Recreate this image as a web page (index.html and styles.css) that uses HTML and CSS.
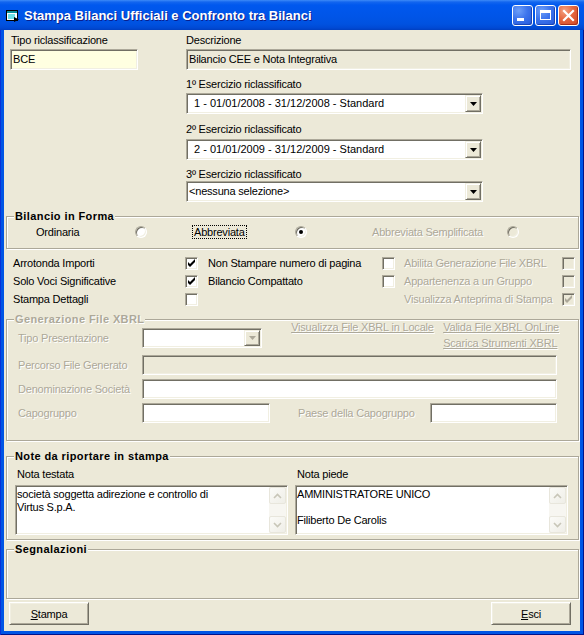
FILE: index.html
```html
<!DOCTYPE html>
<html lang="it">
<head>
<meta charset="utf-8">
<title>Stampa Bilanci Ufficiali e Confronto tra Bilanci</title>
<link rel="stylesheet" href="styles.css">
</head>
<body>
<div class="window">
  <div class="titlebar">
    <svg class="appicon" width="16" height="16" viewBox="0 0 16 16">
      <rect x="1.5" y="2.5" width="11" height="10" fill="#fff" stroke="#000"/>
      <rect x="2" y="3" width="10" height="2" fill="#0a8f9a"/>
      <rect x="3" y="6" width="7" height="5" fill="#6fe0e6"/>
      <path d="M9 9 L14 11.5 L9 14 Z" fill="#000"/>
    </svg>
    <span class="title">Stampa Bilanci Ufficiali e Confronto tra Bilanci</span>
    <div class="tbtns">
      <span class="tbtn"><svg width="19" height="19" viewBox="0 0 19 19"><rect x="4" y="12" width="7" height="3" fill="#fff"/></svg></span>
      <span class="tbtn"><svg width="19" height="19" viewBox="0 0 19 19"><rect x="4.5" y="4.5" width="10" height="9" fill="none" stroke="#fff"/><rect x="4" y="4" width="11" height="3" fill="#fff"/></svg></span>
      <span class="tbtn close"><svg width="19" height="19" viewBox="0 0 19 19"><path d="M5 5 L14 14 M14 5 L5 14" stroke="#fff" stroke-width="2.2" stroke-linecap="square"/></svg></span>
    </div>
  </div>

  <div class="client">
    <div class="top">
      <div class="col-left">
        <div class="lbl">Tipo riclassificazione</div>
        <div class="edit yellow">BCE</div>
      </div>
      <div class="col-right">
        <div class="lbl">Descrizione</div>
        <div class="edit ro">Bilancio CEE e Nota Integrativa</div>

        <div class="lbl lbl-e1">1º Esercizio riclassificato</div>
        <div class="combo">
          <span class="val pad">1 - 01/01/2008 - 31/12/2008 - Standard</span>
          <span class="cbtn"><svg width="7" height="4" viewBox="0 0 7 4"><path d="M0 0 H7 L3.5 4 Z" fill="#000"/></svg></span>
        </div>

        <div class="lbl lbl-e2">2º Esercizio riclassificato</div>
        <div class="combo">
          <span class="val pad">2 - 01/01/2009 - 31/12/2009 - Standard</span>
          <span class="cbtn"><svg width="7" height="4" viewBox="0 0 7 4"><path d="M0 0 H7 L3.5 4 Z" fill="#000"/></svg></span>
        </div>

        <div class="lbl lbl-e3">3º Esercizio riclassificato</div>
        <div class="combo">
          <span class="val txt">&lt;nessuna selezione&gt;</span>
          <span class="cbtn"><svg width="7" height="4" viewBox="0 0 7 4"><path d="M0 0 H7 L3.5 4 Z" fill="#000"/></svg></span>
        </div>
      </div>
    </div>

    <div class="group g-forma">
      <span class="gtitle">Bilancio in Forma</span>
      <div class="radios">
        <span>Ordinaria</span>
        <span class="radio"></span>
        <span><span class="focus">Abbreviata</span></span>
        <span class="radio on"></span>
        <span class="dis">Abbreviata Semplificata</span>
        <span class="radio off"></span>
      </div>
    </div>

    <div class="checks">
      <span>Arrotonda Importi</span>
      <span class="chk"><svg width="9" height="9" viewBox="0 0 9 9"><path d="M1 3 L3 5 L8 0 L8 3 L3 8 L1 6 Z" fill="#000"/></svg></span>
      <span>Non Stampare numero di pagina</span>
      <span class="chk"></span>
      <span class="dis">Abilita Generazione File XBRL</span>
      <span class="chk off"></span>

      <span>Solo Voci Significative</span>
      <span class="chk"><svg width="9" height="9" viewBox="0 0 9 9"><path d="M1 3 L3 5 L8 0 L8 3 L3 8 L1 6 Z" fill="#000"/></svg></span>
      <span>Bilancio Compattato</span>
      <span class="chk"></span>
      <span class="dis">Appartenenza a un Gruppo</span>
      <span class="chk off"></span>

      <span>Stampa Dettagli</span>
      <span class="chk"></span>
      <span></span>
      <span></span>
      <span class="dis">Visualizza Anteprima di Stampa</span>
      <span class="chk off"><svg width="9" height="9" viewBox="0 0 9 9"><path d="M1 3 L3 5 L8 0 L8 3 L3 8 L1 6 Z" fill="#ACA899"/></svg></span>
    </div>

    <div class="group g-xbrl">
      <span class="gtitle dis">Generazione File XBRL</span>
      <div class="xrow xrow1">
        <span class="xlbl dis">Tipo Presentazione</span>
        <div class="combo small">
          <span class="val"></span>
          <span class="cbtn"><svg width="7" height="4" viewBox="0 0 7 4"><path d="M0 0 H7 L3.5 4 Z" fill="#ACA899"/></svg></span>
        </div>
        <div class="links">
          <span class="link">Visualizza File XBRL in Locale</span>
          <span class="link">Valida File XBRL OnLine</span>
          <span></span>
          <span class="link">Scarica Strumenti XBRL</span>
        </div>
      </div>
      <div class="xrow">
        <span class="xlbl dis">Percorso File Generato</span>
        <div class="edit field ro wide"></div>
      </div>
      <div class="xrow">
        <span class="xlbl dis">Denominazione Società</span>
        <div class="edit field wide"></div>
      </div>
      <div class="xrow">
        <span class="xlbl dis">Capogruppo</span>
        <div class="edit field capo"></div>
        <span class="paese dis">Paese della Capogruppo</span>
        <div class="edit field paese-in"></div>
      </div>
    </div>

    <div class="group g-note">
      <span class="gtitle">Note da riportare in stampa</span>
      <div class="notes">
        <div class="note">
          <div class="nlbl">Nota testata</div>
          <div class="memo">
            <div class="mtxt">società soggetta adirezione e controllo di<br>Virtus S.p.A.</div>
            <div class="sb">
              <span class="sbtn"><svg width="9" height="6" viewBox="0 0 9 6"><path d="M1 5 L4.5 1.5 L8 5" fill="none" stroke="#C8C6B8" stroke-width="1.6"/></svg></span>
              <span class="sbtn"><svg width="9" height="6" viewBox="0 0 9 6"><path d="M1 1 L4.5 4.5 L8 1" fill="none" stroke="#C8C6B8" stroke-width="1.6"/></svg></span>
            </div>
          </div>
        </div>
        <div class="note">
          <div class="nlbl">Nota piede</div>
          <div class="memo">
            <div class="mtxt">AMMINISTRATORE UNICO<br><br>Filiberto De Carolis</div>
            <div class="sb">
              <span class="sbtn"><svg width="9" height="6" viewBox="0 0 9 6"><path d="M1 5 L4.5 1.5 L8 5" fill="none" stroke="#C8C6B8" stroke-width="1.6"/></svg></span>
              <span class="sbtn"><svg width="9" height="6" viewBox="0 0 9 6"><path d="M1 1 L4.5 4.5 L8 1" fill="none" stroke="#C8C6B8" stroke-width="1.6"/></svg></span>
            </div>
          </div>
        </div>
      </div>
    </div>

    <div class="group g-segn">
      <span class="gtitle">Segnalazioni</span>
    </div>

    <div class="buttons">
      <span class="btn"><u>S</u>tampa</span>
      <span class="btn"><u>E</u>sci</span>
    </div>
  </div>
</div>
</body>
</html>
```

FILE: styles.css
```css
* { box-sizing: border-box; }
html, body { margin: 0; padding: 0; }
body {
  width: 584px;
  height: 635px;
  overflow: hidden;
  font-family: "Liberation Sans", Arial, sans-serif;
  font-size: 11px;
  color: #000;
  background: #0054E3;
}

.window {
  width: 584px;
  height: 635px;
  padding: 0 4px 4px;
  background: #0055E5;
  box-shadow: inset 1px 0 #0831D9, inset -1px 0 #00138C, inset 0 -1px #00138C;
}

/* ---------- title bar ---------- */
.titlebar {
  height: 30px;
  margin: 0 -4px;
  padding: 1px 5px 0 5px;
  display: flex;
  align-items: center;
  color: #fff;
  background: linear-gradient(#3D8BF8 0px, #1366EF 2px, #0058EE 5px, #0055E8 16px, #0052E0 24px, #0049D4 28px, #003FC0 30px);
}
.appicon { flex: none; margin-right: 3px; }
.title {
  flex: 1;
  font-weight: bold;
  font-size: 13px;
  text-shadow: 1px 1px #0A1E8C;
  white-space: nowrap;
}
.tbtns { display: flex; gap: 2px; }
.tbtn {
  width: 21px;
  height: 21px;
  border: 1px solid #fff;
  border-radius: 3px;
  display: flex;
  align-items: center;
  justify-content: center;
  background: radial-gradient(circle at 30% 25%, #6E9FF8 0%, #3D74EC 45%, #2458DA 100%);
  box-shadow: inset -1px -1px #1A45B8;
}
.tbtn.close {
  background: radial-gradient(circle at 30% 25%, #F4A282 0%, #E5673F 45%, #CC4424 100%);
  box-shadow: inset -1px -1px #A8301A;
}

/* ---------- client ---------- */
.client {
  height: 601px;
  background: #ECE9D8;
  letter-spacing: -0.2px;
}

.lbl { height: 13px; line-height: 13px; white-space: nowrap; margin-bottom: 2px; }

.top { display: flex; padding-top: 4px; height: 172px; }
.col-left { width: 182px; padding-left: 6px; }
.col-left .lbl { padding-left: 1px; }
.col-right { width: 385px; }

.lbl-e1 { margin-top: 8px; }
.lbl-e2 { margin-top: 9px; margin-bottom: 3px; }
.lbl-e3 { margin-top: 8px; margin-bottom: 0; }

.edit {
  height: 21px;
  border: 1px solid;
  border-color: #ACA899 #fff #fff #ACA899;
  box-shadow: inset 1px 1px #716F64, inset -1px -1px #F1EFE2;
  background: #fff;
  padding: 0 2px;
  line-height: 19px;
  white-space: nowrap;
  overflow: hidden;
}
.edit.yellow { width: 128px; background: #FFFFE1; }
.edit.ro { background: #ECE9D8; }

.combo {
  width: 297px;
  height: 21px;
  display: flex;
  padding: 1px;
  border: 1px solid;
  border-color: #ACA899 #fff #fff #ACA899;
  box-shadow: inset 1px 1px #716F64, inset -1px -1px #F1EFE2;
  background: #fff;
}
.combo .val { flex: 1; line-height: 17px; padding-left: 1px; white-space: nowrap; overflow: hidden; letter-spacing: 0; }
.combo .val.txt { letter-spacing: -0.2px; }
.combo .val.pad { padding-left: 6px; }
.cbtn {
  width: 16px;
  height: 17px;
  display: flex;
  align-items: center;
  justify-content: center;
  background: #ECE9D8;
  border: 1px solid;
  border-color: #F1EFE2 #716F64 #716F64 #F1EFE2;
  box-shadow: inset 1px 1px #fff, inset -1px -1px #ACA899;
}
.combo.small { width: 120px; height: 20px; }
.combo.small .cbtn { height: 16px; }

/* ---------- group boxes ---------- */
.group {
  position: relative;
  margin: 0 1px 0 2px;
  border: 1px solid #ACA899;
  box-shadow: 1px 1px #fff, inset 1px 1px #fff;
}
.gtitle {
  position: absolute;
  top: -7px;
  left: 7px;
  padding: 0 1px;
  line-height: 13px;
  font-weight: bold;
  letter-spacing: 0.4px;
  background: #ECE9D8;
  white-space: nowrap;
}

.dis { color: #ACA899; text-shadow: 1px 1px #fff; }

.g-forma { margin-top: 14px; padding: 7px 0 8px 29px; }
.radios {
  display: grid;
  grid-template-columns: 99px 59px 101px 77px 135px 12px;
  height: 16px;
  align-items: center;
  white-space: nowrap;
}
.radio {
  width: 12px;
  height: 12px;
  border-radius: 50%;
  border: 1px solid;
  border-color: #ACA899 #fff #fff #ACA899;
  box-shadow: inset 1px 1px #716F64, inset -1px -1px #F1EFE2;
  background: #fff;
  display: flex;
  align-items: center;
  justify-content: center;
}
.radio.on::after {
  content: "";
  width: 4px;
  height: 4px;
  border-radius: 50%;
  background: #000;
}
.radio.off { background: #ECE9D8; }
.focus { outline: 1px dotted #000; outline-offset: 0; padding: 0 1px; margin-left: -1px; }

.checks {
  display: grid;
  grid-template-columns: 172px 23px 174px 22px 158px 13px;
  grid-auto-rows: 18px;
  align-items: center;
  padding-left: 9px;
  margin-top: 5px;
  white-space: nowrap;
}
.chk {
  width: 13px;
  height: 13px;
  border: 1px solid;
  border-color: #ACA899 #fff #fff #ACA899;
  box-shadow: inset 1px 1px #716F64, inset -1px -1px #F1EFE2;
  background: #fff;
  display: flex;
  align-items: center;
  justify-content: center;
}
.chk.off { background: #ECE9D8; }

/* XBRL */
.g-xbrl { margin-top: 11px; padding: 0 20px 17px 11px; }
.xrow { display: flex; align-items: center; margin-top: 4px; }
.xrow1 { align-items: flex-start; margin-top: 0; }
.xlbl { width: 124px; height: 20px; line-height: 20px; white-space: nowrap; }
.xrow1 .xlbl, .xrow1 .combo { margin-top: 8px; }
.links {
  margin-left: auto;
  margin-right: -1px;
  margin-top: -1px;
  display: grid;
  grid-template-columns: 152px auto;
  grid-auto-rows: 16px;
  align-items: center;
  white-space: nowrap;
}
.link { color: #ACA899; text-shadow: 1px 1px #fff; text-decoration: underline; }
.field { height: 20px; }
.wide { width: 415px; }
.capo { width: 128px; }
.paese { margin-left: 28px; width: 132px; white-space: nowrap; }
.paese-in { width: 127px; }

/* Note */
.g-note { margin-top: 15px; padding: 11px 0 4px 8px; }
.notes { display: flex; gap: 7px; }
.note { width: 273px; }
.nlbl { line-height: 13px; padding-left: 2px; margin-bottom: 4px; }
.memo {
  height: 50px;
  display: flex;
  padding: 1px;
  border: 1px solid;
  border-color: #ACA899 #fff #fff #ACA899;
  box-shadow: inset 1px 1px #716F64, inset -1px -1px #F1EFE2;
  background: #fff;
}
.mtxt { flex: 1; line-height: 13px; padding: 1px 0 0 0; white-space: nowrap; overflow: hidden; }
.sb {
  width: 17px;
  display: flex;
  flex-direction: column;
  justify-content: space-between;
  background: #F7F6F1;
}
.sbtn {
  height: 17px;
  display: flex;
  align-items: center;
  justify-content: center;
  border: 1px solid #E8E6DC;
  border-radius: 2px;
  background: linear-gradient(135deg, #FBFBF8, #EFEEE7);
}

.g-segn { margin-top: 9px; height: 50px; }

/* Buttons */
.buttons {
  display: flex;
  justify-content: space-between;
  padding: 0 9px 0 5px;
  margin-top: 3px;
}
.btn {
  width: 80px;
  height: 23px;
  display: flex;
  align-items: center;
  justify-content: center;
  background: #ECE9D8;
  border: 1px solid;
  border-color: #fff #716F64 #716F64 #fff;
  box-shadow: inset 1px 1px #F1EFE2, inset -1px -1px #ACA899;
}
```
